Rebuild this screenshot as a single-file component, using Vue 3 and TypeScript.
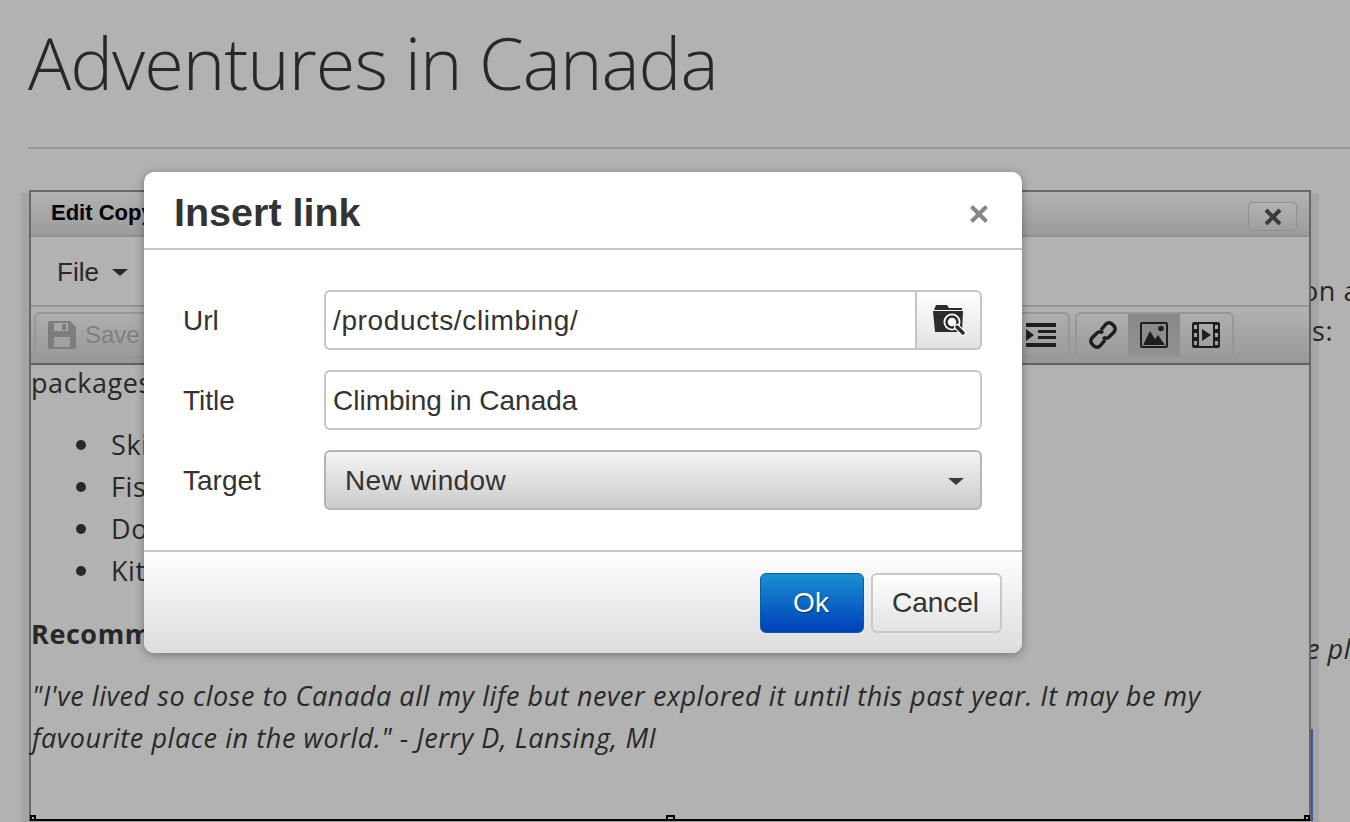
<script setup lang="ts">
const bullets: string[] = ['Skiing', 'Fishing', 'Dog sledding', 'Kite surfing']
</script>

<template>
  <div class="page">
    <main class="doc">
      <h1 class="doc-title">Adventures in Canada</h1>
      <hr class="rule" />
      <div class="stage">
        <div class="back">
          <p class="back-a">on a</p>
          <p class="back-b">s:</p>
          <p class="back-c">e pl</p>
        </div>
        <section class="editor">
          <header class="ed-head">
            <span class="ed-title">Edit Copy</span>
            <button class="ed-close" type="button">
              <svg width="20" height="20" viewBox="0 0 20 20"><path d="M3 3 17 17M17 3 3 17" stroke="#555" stroke-width="4" /></svg>
            </button>
          </header>
          <nav class="menubar">
            <span class="menu-item">File</span>
            <i class="caret"></i>
          </nav>
          <div class="toolbar">
            <div class="group save">
              <svg class="ic" width="28" height="28" viewBox="0 0 28 28">
                <path fill="#b3b3b3" fill-rule="evenodd" d="M2 0h20l6 6v20a2 2 0 0 1-2 2H2a2 2 0 0 1-2-2V2a2 2 0 0 1 2-2zM6 2v8h14V2zM14 3h4v6h-4zM6 16v10h16V16z" />
              </svg>
              <span class="save-text">Save</span>
            </div>
            <div class="spacer"></div>
            <div class="group indent">
              <svg width="30" height="24" viewBox="0 0 30 24">
                <path fill="#2c2c2c" d="M0 0h30v4H0zM12 7h18v3H12zM12 13h18v3H12zM0 20h30v4H0zM0 6l8 6-8 6z" />
              </svg>
            </div>
            <div class="group links">
              <span class="tb-btn">
                <svg width="30" height="30" viewBox="0 0 30 30" fill="none" stroke="#2c2c2c" stroke-width="3.500">
                  <path d="M13 10 18 4a4.500 4.500 0 0 1 6 0l2 2a4.500 4.500 0 0 1 0 6l-5 5a4.500 4.500 0 0 1-6 0" />
                  <path d="M17 20 12 26a4.500 4.500 0 0 1-6 0l-2-2a4.500 4.500 0 0 1 0-6l5-5a4.500 4.500 0 0 1 6 0" />
                </svg>
              </span>
              <span class="tb-btn active">
                <svg width="28" height="26" viewBox="0 0 28 26">
                  <path fill="#2c2c2c" fill-rule="evenodd" d="M2 0h24a2 2 0 0 1 2 2v22a2 2 0 0 1-2 2H2a2 2 0 0 1-2-2V2a2 2 0 0 1 2-2zM2 2v22h24V2z" />
                  <path fill="#2c2c2c" d="M3 23 10 9l5 8 3-4 7 10z" />
                  <circle fill="#2c2c2c" cx="21" cy="6.500" r="2.800" />
                </svg>
              </span>
              <span class="tb-btn">
                <svg width="28" height="26" viewBox="0 0 28 26">
                  <path fill="#2c2c2c" fill-rule="evenodd" d="M2 0h24a2 2 0 0 1 2 2v22a2 2 0 0 1-2 2H2a2 2 0 0 1-2-2V2a2 2 0 0 1 2-2zM7 2v22h14V2zM2 3v4h3V3zM2 11v4h3v-4zM2 19v4h3v-4zM23 3v4h3V3zM23 11v4h3v-4zM23 19v4h3v-4z" />
                  <path fill="#2c2c2c" d="M10 7l9 6-9 6z" />
                </svg>
              </span>
            </div>
          </div>
          <div class="content">
            <p class="line-first">packages</p>
            <ul class="list">
              <li v-for="b in bullets" :key="b">{{ b }}</li>
            </ul>
            <p class="reco">Recommendations</p>
            <p class="quote">"I've lived so close to Canada all my life but never explored it until this past year. It may be my favourite place in the world." - Jerry D, Lansing, MI</p>
          </div>
          <i class="handle h-l"></i>
          <i class="handle h-m"></i>
          <i class="handle h-r"></i>
          <i class="blue-line"></i>
        </section>
      </div>
    </main>

    <div class="overlay"></div>

    <div class="dialog">
      <div class="dlg-head">
        <span class="dlg-title">Insert link</span>
        <svg class="dlg-x" width="20" height="20" viewBox="0 0 20 20"><path d="M2.500 2.500 17.500 17.500M17.500 2.500 2.500 17.500" stroke="#858585" stroke-width="4" /></svg>
      </div>
      <form class="dlg-body">
        <label class="field-label">Url</label>
        <div class="combo">
          <input class="text-in joined" value="/products/climbing/" />
          <span class="browse">
            <svg width="34" height="32" viewBox="0 0 34 32">
              <path fill="#2c2c2c" d="M4 1h11l2 3h13v2H2zM1 7h30l-1 21H3z" />
              <circle cx="20" cy="18" r="8.500" fill="#fff" />
              <circle cx="20" cy="18" r="5.500" fill="none" stroke="#2c2c2c" stroke-width="2.500" />
              <path d="M25 23 31 29" stroke="#fff" stroke-width="6" stroke-linecap="round" />
              <path d="M25 23 31 29" stroke="#2c2c2c" stroke-width="3.500" stroke-linecap="round" />
            </svg>
          </span>
        </div>
        <label class="field-label">Title</label>
        <input class="text-in" value="Climbing in Canada" />
        <label class="field-label">Target</label>
        <div class="select">
          <span>New window</span>
          <i class="caret dark"></i>
        </div>
      </form>
      <div class="dlg-foot">
        <button class="btn ok" type="button">Ok</button>
        <button class="btn cancel" type="button">Cancel</button>
      </div>
    </div>
  </div>
</template>

<style>
html, body { margin: 0; padding: 0; }
</style>

<style scoped>
.page {
  position: relative;
  width: 1350px;
  height: 822px;
  overflow: hidden;
  background: #fff;
  font-family: "Open Sans", "Liberation Sans", sans-serif;
  color: #3a3a3a;
}
.doc { padding-left: 28px; }
.doc-title {
  margin: 0;
  padding: 18px 0 0;
  height: 129px;
  font-size: 72px;
  line-height: 88px;
  font-weight: 300;
  letter-spacing: -1px;
  white-space: nowrap;
}
.rule {
  margin: 0 0 41px;
  border: 0;
  height: 2px;
  background: #ddd;
}
.stage { display: grid; }
.back, .editor { grid-area: 1 / 1; }
.back { font-size: 27px; letter-spacing: 0.570px; height: 631px; position: relative; }
.back p { margin: 0; line-height: 42px; white-space: nowrap; }
.back-a { padding: 80px 0 0 1274px; }
.back-b { padding-left: 1284px; margin-top: -2px !important; }
.back-c { padding: 276px 0 0 1278px; font-style: italic; }
.editor {
  position: relative;
  box-sizing: border-box;
  width: 1282px;
  height: 631px;
  margin-left: 1px;
  border: 2px solid #969696;
  border-bottom-color: #000;
  background: #fff;
  box-shadow: -8px 3px 0 0 rgba(0, 0, 0, 0.075), 8px 3px 0 0 rgba(0, 0, 0, 0.075);
  z-index: 1;
}
.ed-head {
  display: flex;
  align-items: center;
  justify-content: space-between;
  box-sizing: border-box;
  height: 45px;
  padding: 0 12px 2px 20px;
  background: linear-gradient(#fff, #dfdfdf);
  border-bottom: 2px solid #cfcfcf;
}
.ed-title {
  font-family: "Liberation Sans", sans-serif;
  font-weight: 700;
  font-size: 22px;
  color: #000;
}
.ed-close {
  display: flex;
  align-items: center;
  justify-content: center;
  width: 49px;
  height: 29px;
  margin-top: 8px;
  padding: 0;
  background: linear-gradient(#fff, #e4e4e4);
  border: 1px solid #cfcfcf;
  border-radius: 4px;
}
.menubar {
  display: flex;
  align-items: center;
  box-sizing: border-box;
  height: 70px;
  padding: 2px 0 0 26px;
  gap: 13px;
  font-family: "Liberation Sans", sans-serif;
  font-size: 26px;
  border-bottom: 2px solid #d4d4d4;
  background: #fff;
}
.caret {
  display: inline-block;
  border-left: 8px solid transparent;
  border-right: 8px solid transparent;
  border-top: 7px solid #3a3a3a;
}
.toolbar {
  display: flex;
  align-items: center;
  box-sizing: border-box;
  height: 58px;
  padding: 0 75px 0 3px;
  background: linear-gradient(#fff, #d9d9d9);
  border-bottom: 2px solid #8c8c8c;
}
.group {
  display: flex;
  align-items: center;
  box-sizing: border-box;
  height: 46px;
  border: 2px solid #d9d9d9;
  border-radius: 6px;
}
.save {
  width: 140px;
  padding-left: 12px;
  gap: 9px;
  font-family: "Liberation Sans", sans-serif;
  font-size: 24px;
  color: #b7b7b7;
}
.spacer { flex: 1; }
.indent {
  width: 60px;
  margin-right: 5px;
  justify-content: flex-end;
  padding-right: 12px;
  border-left: 0;
  border-radius: 0 6px 6px 0;
}
.links { width: 159px; }
.tb-btn {
  flex: 0 0 52px;
  height: 100%;
  display: flex;
  align-items: center;
  justify-content: center;
}
.tb-btn:first-child { flex-basis: 51px; }
.tb-btn.active { background: linear-gradient(#c4c4c4, #d0d0d0); }
.content {
  margin-top: -3px;
  font-size: 27px;
  letter-spacing: 0.570px;
  line-height: 42px;
  color: #3a3a3a;
}
.content p { margin: 0; }
.list { margin: 20px 0 21px; padding: 0 0 0 45px; list-style: none; }
.list li { display: flex; align-items: center; gap: 25px; }
.list li::before {
  content: "";
  width: 10px;
  height: 10px;
  border-radius: 50%;
  background: #3a3a3a;
}
.reco { font-weight: 700; margin-bottom: 20px !important; }
.quote { font-style: italic; padding-right: 80px; padding-left: 1px; }
.handle {
  position: absolute;
  bottom: -2px;
  height: 6px;
  border: 2px solid #000;
  background: #fff;
  box-sizing: border-box;
}
.h-l { left: -1px; width: 6px; }
.h-m { left: 635px; width: 9px; }
.h-r { right: -1px; width: 6px; }
.blue-line {
  position: absolute;
  right: -4px;
  top: 537px;
  bottom: -2px;
  width: 2px;
  background: #5b82d8;
}
.overlay {
  position: absolute;
  inset: 0;
  background: rgba(0, 0, 0, 0.3);
  z-index: 2;
}
.dialog {
  position: absolute;
  left: 144px;
  top: 172px;
  z-index: 3;
  box-sizing: border-box;
  width: 878px;
  height: 481px;
  display: flex;
  flex-direction: column;
  border-radius: 10px;
  overflow: hidden;
  background: #fff;
  box-shadow: 0 2px 10px rgba(0, 0, 0, 0.35);
  font-family: "Liberation Sans", sans-serif;
  color: #333;
}
.dlg-head {
  box-sizing: border-box;
  height: 78px;
  display: flex;
  align-items: center;
  justify-content: space-between;
  padding: 4px 33px 0 30px;
  border-bottom: 2px solid #c5c5c5;
}
.dlg-title { font-size: 39.500px; font-weight: 700; }
.dlg-x { margin-top: 4px; }
.dlg-body {
  display: grid;
  grid-template-columns: 141px 658px;
  grid-auto-rows: 60px;
  row-gap: 20px;
  align-items: center;
  padding: 40px 0 0 39px;
  height: 300px;
  box-sizing: border-box;
  font-size: 28px;
}
.field-label { font-size: 28px; margin-top: 2px; }
.combo { display: flex; height: 60px; }
.text-in {
  box-sizing: border-box;
  width: 100%;
  height: 60px;
  padding: 2px 7px 0;
  font: 28px "Liberation Sans", sans-serif;
  color: #333;
  border: 2px solid #c5c5c5;
  border-radius: 6px;
  background: #fff;
  outline: none;
}
.joined {
  border-radius: 6px 0 0 6px;
  border-right: 0;
  flex: 1;
  min-width: 0;
  letter-spacing: 0.630px;
}
.browse {
  box-sizing: border-box;
  width: 67px;
  display: flex;
  align-items: center;
  justify-content: center;
  border: 2px solid #c5c5c5;
  border-radius: 0 6px 6px 0;
  background: linear-gradient(#fff, #e2e2e2);
}
.select {
  box-sizing: border-box;
  height: 60px;
  display: flex;
  align-items: center;
  justify-content: space-between;
  padding: 2px 16px 0 19px;
  border: 2px solid #b5b5b5;
  border-radius: 6px;
  background: linear-gradient(#f4f4f4, #cbcbcb);
  letter-spacing: 0.400px;
}
.dlg-foot {
  flex: 1;
  display: flex;
  justify-content: flex-end;
  align-items: center;
  gap: 7px;
  padding-right: 20px;
  border-top: 2px solid #c5c5c5;
  background: linear-gradient(#fff, #dcdcdc);
}
.btn {
  box-sizing: border-box;
  height: 60px;
  font: 28px "Liberation Sans", sans-serif;
  border-radius: 6px;
  padding: 0 2px 0 0;
}
.ok {
  width: 104px;
  color: #fff;
  background: linear-gradient(#1a8fd2, #0040b8);
  border: 1px solid #0a5aa8;
  text-shadow: 1px 1px 1px rgba(0, 0, 0, 0.4);
}
.cancel {
  width: 131px;
  color: #333;
  background: linear-gradient(#fff, #e2e2e2);
  border: 2px solid #c8c8c8;
}
</style>
